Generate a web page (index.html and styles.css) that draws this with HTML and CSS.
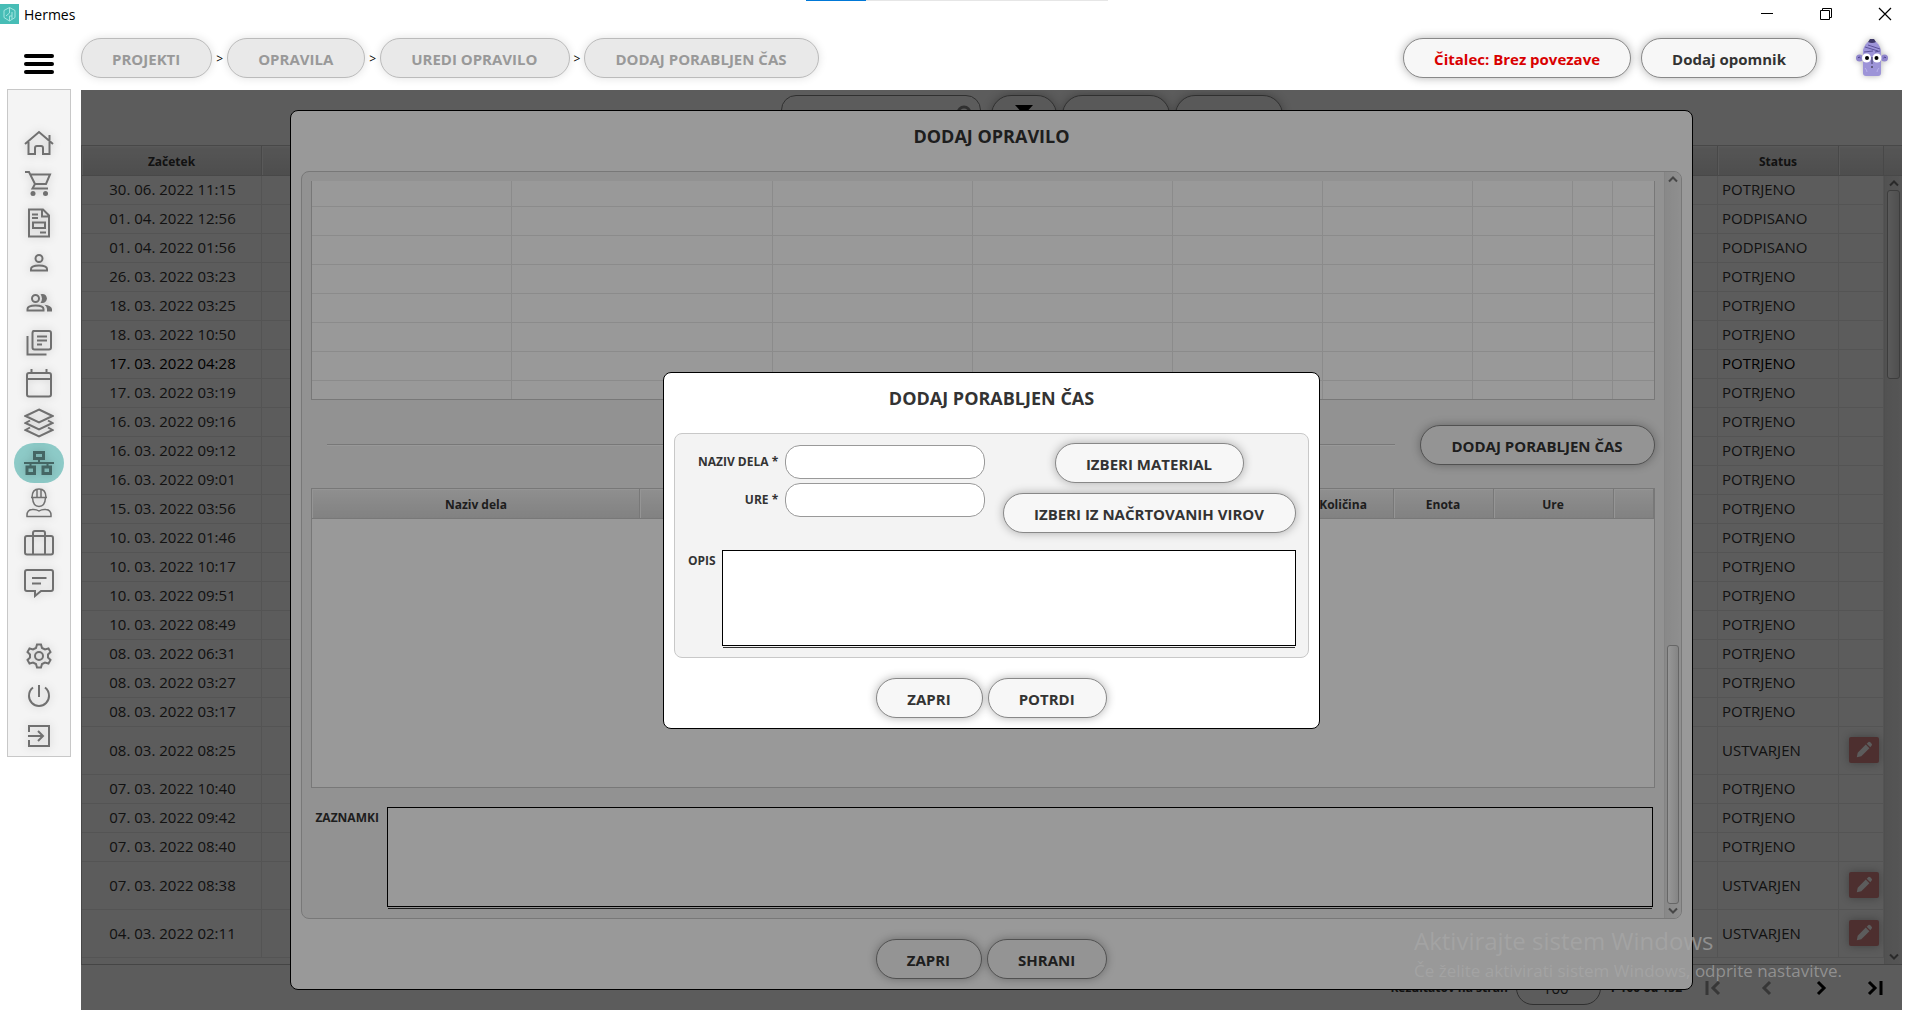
FILE: index.html
```html
<!DOCTYPE html>
<html lang="sl">
<head>
    <meta charset="UTF-8">
    <meta name="viewport" content="width=device-width, initial-scale=1.0">
    <title>Hermes</title>
    <link rel="stylesheet" href="styles.css">
</head>
<body>
    <div class="progress"></div>

    <div class="titlebar">
        <svg class="app-icon" viewBox="0 0 19 20"><rect width="19" height="20" fill="#47bdb6"/><path d="M9.500 3.500L15 6.500V13.500L9.500 17L4 13.500V6.500L9.500 3.500M9.500 3.500V9L6 12M9.500 17V12H12V15M12 12V8" fill="none" stroke="#a5e6e0" stroke-width="1"/></svg>
        <span class="app-name">Hermes</span>
        <div class="window-buttons">
            <button aria-label="Minimiraj"><svg viewBox="0 0 14 14"><path d="M1 6.500H13" stroke="#000"/></svg></button>
            <button aria-label="Obnovi"><svg viewBox="0 0 14 14"><path d="M1.500 3.500H10.500V12.500H1.500ZM3.500 3.500V1.500H12.500V10.500H10.500" fill="none" stroke="#000"/></svg></button>
            <button aria-label="Zapri okno"><svg viewBox="0 0 14 14"><path d="M1 1L13 13M13 1L1 13" stroke="#000" stroke-width="1.200"/></svg></button>
        </div>
    </div>

    <header class="header">
        <button class="menu-button" aria-label="Meni"><span></span><span></span><span></span></button>
        <nav class="breadcrumbs">
            <button class="btn" disabled>PROJEKTI</button>
            <span>&gt;</span>
            <button class="btn" disabled>OPRAVILA</button>
            <span>&gt;</span>
            <button class="btn" disabled>UREDI OPRAVILO</button>
            <span>&gt;</span>
            <button class="btn" disabled>DODAJ PORABLJEN ČAS</button>
        </nav>
        <div class="header-right">
            <button class="btn btn-alert">Čitalec: Brez povezave</button>
            <button class="btn">Dodaj opomnik</button>
            <svg class="avatar" viewBox="0 0 32 38">
                <circle cx="3.500" cy="19" r="3.500" fill="#8f85cc"/><circle cx="28.500" cy="19" r="3.500" fill="#8f85cc"/>
                <path d="M2 19q1-2 2.500 0M27.500 19q1.500-2 2.500 0" fill="none" stroke="#4a3f8c"/>
                <path d="M7 11Q9 4 14 2H18Q23 4 25 11V34Q25 37 22 37H10Q7 37 7 34Z" fill="#9d94d8"/>
                <path d="M12 3L14 0H18L20 3Q16 5 12 3Z" fill="#3f3868"/>
                <path d="M9 8L22 12M12 6L24 10M8 13L17 12M19 13L24 12" stroke="#5c5299" stroke-width="1"/>
                <circle cx="10.500" cy="19" r="4.500" fill="#fff"/><circle cx="21" cy="19" r="4.500" fill="#fff"/>
                <circle cx="11" cy="19" r="2" fill="#000"/><circle cx="20.500" cy="19" r="2" fill="#000"/>
                <path d="M16 18V25" stroke="#3f3868"/><path d="M15 28H17" stroke="#222"/>
                <path d="M9 29q2 2 2 4M23 29q-2 2-2 4" fill="none" stroke="#b8b0ea"/>
            </svg>
        </div>
    </header>

    <div class="layout">
        <nav class="sidebar">
            <a href="#" aria-label="Domov"><svg viewBox="0 0 30 30"><path d="M1 16L15 4L29 16M4.500 14V26H11V20Q11 18 13 18H17Q19 18 19 20V26H25.500V14M25.500 12V7" stroke-width="2"/></svg></a>
            <a href="#" aria-label="Naročila"><svg viewBox="0 0 30 30"><path d="M1 4H5L11 16H22L26 6.500H6M11 16L8.500 20.500H24" stroke-width="2"/><circle cx="9" cy="25.500" r="2.500" class="solid"/><circle cx="21.500" cy="25.500" r="2.500" class="solid"/></svg></a>
            <a href="#" aria-label="Dokumenti"><svg viewBox="0 0 30 30"><path d="M5 1.500H19L25 7.500V28.500H5ZM18 1.500V8.500H25M9 14.500H21V20H9ZM8 6.500H14M8 10H14M16 24.500H22" stroke-width="2"/></svg></a>
            <a href="#" aria-label="Uporabnik"><svg viewBox="0 0 30 30"><circle cx="15" cy="10.500" r="3.500" stroke-width="2"/><path d="M7 22.500V21Q7 17.500 15 17.500Q23 17.500 23 21V22.500Z" stroke-width="2"/></svg></a>
            <a href="#" aria-label="Skupine"><svg viewBox="0 0 30 30"><circle cx="11.500" cy="10.500" r="3.500" stroke-width="2"/><path d="M3.500 22.500V21Q3.500 17.500 11.500 17.500Q19.500 17.500 19.500 21V22.500Z" stroke-width="2"/><path class="solid" d="M16.500 6.300Q22 5 23 10.500Q22 16 16.500 14.700Q19.500 10.500 16.500 6.300ZM20.500 16.800Q27.500 17.500 28 21V23.500H23V21Q23 18.500 20.500 16.800Z"/></svg></a>
            <a href="#" aria-label="Novice"><svg viewBox="0 0 30 30"><path d="M8.500 3H25Q27 3 27 5V19.500Q27 21.500 25 21.500H10.500Q8.500 21.500 8.500 19.500V5Q8.500 3 10.500 3M3.500 8V26.500H22.500M13 8.500H23M13 12.500H23M13 16.500H18" stroke-width="2"/></svg></a>
            <a href="#" aria-label="Koledar"><svg viewBox="0 0 30 30"><path d="M5 5H25Q27 5 27 7V26.500Q27 28.500 25 28.500H5Q3 28.500 3 26.500V7Q3 5 5 5ZM3 11H27M7.500 1V5M22.500 1V5" stroke-width="2"/></svg></a>
            <a href="#" aria-label="Sloji"><svg viewBox="0 0 30 30"><path d="M15 1.500L28.500 8L15 14.500L1.500 8ZM6 12.500L1.500 15L15 21.500L28.500 15L24 12.500M6 19.500L1.500 22L15 28.500L28.500 22L24 19.500" stroke-width="2"/></svg></a>
            <a href="#" class="active" aria-label="Projekti"><svg viewBox="0 0 30 30"><path d="M0 15H30M15 10V15M6.500 15V18M23.500 15V18" stroke-width="2"/><path d="M10.500 4.500H19.500V10.500H10.500ZM3 19H10.500V25.500H3ZM19 19H26.500V25.500H19Z" stroke-width="3"/></svg></a>
            <a href="#" aria-label="Delavci"><svg viewBox="0 0 30 30"><path d="M8 9.500Q8 1 15 1Q22 1 22 9.500M7 9.500H23M13 9.500V2M17 9.500V2M8.500 9.500Q9 18.500 15 18.500Q21 18.500 21.500 9.500M3 28.500Q2.500 22 8 21.500Q12 21 15 23Q18 21 22 21.500Q27.500 22 27 28.500Z" stroke-width="1.500"/></svg></a>
            <a href="#" aria-label="Potovanja"><svg viewBox="0 0 30 30"><path d="M3 8H27Q29 8 29 10V24.500Q29 26.500 27 26.500H3Q1 26.500 1 24.500V10Q1 8 3 8ZM9 26.500V5Q9 3 11 3H19Q21 3 21 5V26.500" stroke-width="2"/></svg></a>
            <a href="#" aria-label="Sporočila"><svg viewBox="0 0 30 30"><path d="M3 2H27Q29 2 29 4V21Q29 23 27 23H17L11 28V23H3Q1 23 1 21V4Q1 2 3 2ZM8 10H22.500M8 15.500H17" stroke-width="2"/></svg></a>
            <a href="#" class="settings" aria-label="Nastavitve"><svg viewBox="0 0 30 30"><path d="M13 3.500H17L18 7L21 8.500L24.500 7.500L26.500 11L24 13.500V16.500L26.500 19L24.500 22.500L21 21.500L18 23L17 26.500H13L12 23L9 21.500L5.500 22.500L3.500 19L6 16.500V13.500L3.500 11L5.500 7.500L9 8.500L12 7Z" stroke-width="2"/><circle cx="15" cy="15" r="4" stroke-width="2"/></svg></a>
            <a href="#" aria-label="Izklop"><svg viewBox="0 0 30 30"><path d="M15 4V16M9 6.500Q5 9.500 5 15A10 10 0 0 0 25 15Q25 9.500 21 6.500" stroke-width="2"/></svg></a>
            <a href="#" aria-label="Odjava"><svg viewBox="0 0 30 30"><path d="M5 11V5H25V25H5V19M4 15H18M14 10L19 15L14 20" stroke-width="2"/></svg></a>
        </nav>

        <main class="content">
            <div class="toolbar">
                <div class="search">
                    <input type="text" aria-label="Iskanje">
                    <svg viewBox="0 0 20 20"><circle cx="8" cy="8" r="6" fill="none" stroke="#888" stroke-width="3"/><path d="M12 12L18 18" stroke="#888" stroke-width="3"/></svg>
                </div>
                <button class="btn tool-filter" aria-label="Filter"><svg viewBox="0 0 20 20"><path d="M0 1H20L12 10V19H8V10Z"/></svg></button>
                <button class="btn tool-button" aria-label="Dodaj"></button>
                <button class="btn tool-button" aria-label="Osveži"></button>
            </div>

            <div class="table-area">
                <table class="tasks">
                    <colgroup><col class="col-start"><col><col class="col-status"><col class="col-edit"></colgroup>
                    <thead>
                        <tr><th>Začetek</th><th></th><th>Status</th><th></th></tr>
                    </thead>
                    <tbody>
                        <tr><td>30. 06. 2022 11:15</td><td></td><td>POTRJENO</td><td></td></tr>
                        <tr><td>01. 04. 2022 12:56</td><td></td><td>PODPISANO</td><td></td></tr>
                        <tr><td>01. 04. 2022 01:56</td><td></td><td>PODPISANO</td><td></td></tr>
                        <tr><td>26. 03. 2022 03:23</td><td></td><td>POTRJENO</td><td></td></tr>
                        <tr><td>18. 03. 2022 03:25</td><td></td><td>POTRJENO</td><td></td></tr>
                        <tr><td>18. 03. 2022 10:50</td><td></td><td>POTRJENO</td><td></td></tr>
                        <tr class="selected"><td>17. 03. 2022 04:28</td><td></td><td>POTRJENO</td><td></td></tr>
                        <tr><td>17. 03. 2022 03:19</td><td></td><td>POTRJENO</td><td></td></tr>
                        <tr><td>16. 03. 2022 09:16</td><td></td><td>POTRJENO</td><td></td></tr>
                        <tr><td>16. 03. 2022 09:12</td><td></td><td>POTRJENO</td><td></td></tr>
                        <tr><td>16. 03. 2022 09:01</td><td></td><td>POTRJENO</td><td></td></tr>
                        <tr><td>15. 03. 2022 03:56</td><td></td><td>POTRJENO</td><td></td></tr>
                        <tr><td>10. 03. 2022 01:46</td><td></td><td>POTRJENO</td><td></td></tr>
                        <tr><td>10. 03. 2022 10:17</td><td></td><td>POTRJENO</td><td></td></tr>
                        <tr><td>10. 03. 2022 09:51</td><td></td><td>POTRJENO</td><td></td></tr>
                        <tr><td>10. 03. 2022 08:49</td><td></td><td>POTRJENO</td><td></td></tr>
                        <tr><td>08. 03. 2022 06:31</td><td></td><td>POTRJENO</td><td></td></tr>
                        <tr><td>08. 03. 2022 03:27</td><td></td><td>POTRJENO</td><td></td></tr>
                        <tr><td>08. 03. 2022 03:17</td><td></td><td>POTRJENO</td><td></td></tr>
                        <tr class="editable"><td>08. 03. 2022 08:25</td><td></td><td>USTVARJEN</td><td><button class="edit" aria-label="Uredi"><svg viewBox="0 0 20 20"><path d="M2 18L3 13L12 4L16 8L7 17ZM13 3L15 1Q16 0.500 17 1.500L18.500 3Q19.500 4 18.500 5L17 7Z"/></svg></button></td></tr>
                        <tr><td>07. 03. 2022 10:40</td><td></td><td>POTRJENO</td><td></td></tr>
                        <tr><td>07. 03. 2022 09:42</td><td></td><td>POTRJENO</td><td></td></tr>
                        <tr><td>07. 03. 2022 08:40</td><td></td><td>POTRJENO</td><td></td></tr>
                        <tr class="editable"><td>07. 03. 2022 08:38</td><td></td><td>USTVARJEN</td><td><button class="edit" aria-label="Uredi"><svg viewBox="0 0 20 20"><path d="M2 18L3 13L12 4L16 8L7 17ZM13 3L15 1Q16 0.500 17 1.500L18.500 3Q19.500 4 18.500 5L17 7Z"/></svg></button></td></tr>
                        <tr class="editable"><td>04. 03. 2022 02:11</td><td></td><td>USTVARJEN</td><td><button class="edit" aria-label="Uredi"><svg viewBox="0 0 20 20"><path d="M2 18L3 13L12 4L16 8L7 17ZM13 3L15 1Q16 0.500 17 1.500L18.500 3Q19.500 4 18.500 5L17 7Z"/></svg></button></td></tr>
                    </tbody>
                </table>
                <div class="table-scroll">
                    <div class="scroll-corner"></div>
                    <div class="scrollbar scrollbar-top">
                        <svg viewBox="0 0 10 10"><path d="M1 7L5 3L9 7"/></svg>
                        <div class="thumb"></div>
                        <svg viewBox="0 0 10 10"><path d="M1 3L5 7L9 3"/></svg>
                    </div>
                </div>
            </div>

            <div class="pagination">
                <label for="pageSize">Rezultatov na stran</label>
                <select id="pageSize"><option>100</option></select>
                <span class="range">1-100 od 152</span>
                <button disabled aria-label="Prva stran"><svg viewBox="0 0 18 18"><path d="M3 2V16M15 3L9 9L15 15"/></svg></button>
                <button disabled aria-label="Prejšnja stran"><svg viewBox="0 0 18 18"><path d="M12 3L6 9L12 15"/></svg></button>
                <button aria-label="Naslednja stran"><svg viewBox="0 0 18 18"><path d="M6 3L12 9L6 15"/></svg></button>
                <button aria-label="Zadnja stran"><svg viewBox="0 0 18 18"><path d="M3 3L9 9L3 15M15 2V16"/></svg></button>
            </div>

            <!-- Dodaj opravilo -->
            <div class="overlay">
                <section class="modal modal-task">
                    <h2>DODAJ OPRAVILO</h2>
                    <div class="panel panel-scroll">
                        <div class="panel-content">
                            <table class="grid">
                                <colgroup><col class="w200"><col class="w260"><col class="w200"><col class="w200"><col class="w150"><col class="w150"><col class="w100"><col class="w40"><col></colgroup>
                                <tbody>
                                    <tr class="cut"><td></td><td></td><td></td><td></td><td></td><td></td><td></td><td></td><td></td></tr>
                                    <tr><td></td><td></td><td></td><td></td><td></td><td></td><td></td><td></td><td></td></tr>
                                    <tr><td></td><td></td><td></td><td></td><td></td><td></td><td></td><td></td><td></td></tr>
                                    <tr><td></td><td></td><td></td><td></td><td></td><td></td><td></td><td></td><td></td></tr>
                                    <tr><td></td><td></td><td></td><td></td><td></td><td></td><td></td><td></td><td></td></tr>
                                    <tr><td></td><td></td><td></td><td></td><td></td><td></td><td></td><td></td><td></td></tr>
                                    <tr><td></td><td></td><td></td><td></td><td></td><td></td><td></td><td></td><td></td></tr>
                                    <tr class="last"><td></td><td></td><td></td><td></td><td></td><td></td><td></td><td></td><td></td></tr>
                                </tbody>
                            </table>

                            <div class="divider">
                                <hr>
                                <button class="btn">DODAJ PORABLJEN ČAS</button>
                            </div>

                            <div class="work">
                                <table>
                                    <colgroup><col class="w328"><col><col class="w100"><col class="w100"><col class="w120"><col class="w40"></colgroup>
                                    <thead>
                                        <tr><th>Naziv dela</th><th></th><th>Količina</th><th>Enota</th><th>Ure</th><th></th></tr>
                                    </thead>
                                </table>
                            </div>

                            <div class="notes">
                                <label for="notes">ZAZNAMKI</label>
                                <textarea id="notes"></textarea>
                            </div>
                        </div>
                        <div class="scrollbar scrollbar-bottom">
                            <svg viewBox="0 0 10 10"><path d="M1 7L5 3L9 7"/></svg>
                            <div class="thumb"></div>
                            <svg viewBox="0 0 10 10"><path d="M1 3L5 7L9 3"/></svg>
                        </div>
                    </div>
                    <div class="modal-buttons">
                        <button class="btn">ZAPRI</button>
                        <button class="btn">SHRANI</button>
                    </div>
                </section>
            </div>

            <!-- Dodaj porabljen čas -->
            <div class="overlay">
                <section class="modal modal-time">
                    <h2>DODAJ PORABLJEN ČAS</h2>
                    <div class="panel panel-form">
                        <div class="form-top">
                            <div class="fields">
                                <label for="workName">NAZIV DELA *</label>
                                <input type="text" id="workName">
                                <label for="hours">URE *</label>
                                <input type="text" id="hours">
                            </div>
                            <div class="pickers">
                                <button class="btn">IZBERI MATERIAL</button>
                                <button class="btn">IZBERI IZ NAČRTOVANIH VIROV</button>
                            </div>
                        </div>
                        <div class="description">
                            <label for="description">OPIS</label>
                            <textarea id="description"></textarea>
                        </div>
                    </div>
                    <div class="modal-buttons">
                        <button class="btn">ZAPRI</button>
                        <button class="btn">POTRDI</button>
                    </div>
                </section>
            </div>
        </main>
    </div>

    <div class="watermark">
        <p class="watermark-title">Aktivirajte sistem Windows</p>
        <p>Če želite aktivirati sistem Windows, odprite nastavitve.</p>
    </div>
</body>
</html>
```

FILE: styles.css
```css
* {
    box-sizing: border-box;
}

body {
    margin: 0;
    height: 100vh;
    display: flex;
    flex-direction: column;
    position: relative;
    overflow: hidden;
    background-color: #fff;
    color: #333;
    font-family: "Open Sans", "Noto Sans", sans-serif;
    font-size: 15px;
}

button, input, select, textarea {
    font-family: inherit;
    color: inherit;
}

button {
    padding: 0;
    border: none;
    background: none;
}

table {
    width: 100%;
    table-layout: fixed;
    border-collapse: separate;
    border-spacing: 0;
}

/* Title bar */
.progress {
    position: absolute;
    top: 0;
    left: 806px;
    width: 302px;
    height: 1px;
    background: linear-gradient(to right, #0078d7 20%, #e6e6e6 20%);
}

.titlebar {
    height: 30px;
    flex: none;
    display: flex;
    align-items: center;
    gap: 5px;
    padding-bottom: 2px;
    color: #000;
    font-size: 14px;
}

.app-icon {
    width: 19px;
    height: 20px;
}

.window-buttons {
    margin-left: auto;
    padding-right: 20px;
    display: flex;
    gap: 45px;
}

.window-buttons button,
.window-buttons svg {
    display: block;
    width: 14px;
    height: 14px;
}

/* Header */
.header {
    height: 60px;
    flex: none;
    display: flex;
    align-items: flex-start;
    padding: 8px 24px 0;
}

.menu-button {
    width: 30px;
    margin: 16px 27px 0 0;
    display: flex;
    flex-direction: column;
    gap: 4px;
}

.menu-button span {
    width: 100%;
    height: 4px;
    border-radius: 2px;
    background-color: #000;
}

.btn {
    height: 40px;
    padding: 2px 31px 0 30px;
    border: 1px solid #888;
    border-radius: 20px;
    background-color: #f7f7f7;
    box-shadow: 0 0 10px rgba(0, 0, 0, 0.3);
    color: #333;
    font-size: 15px;
    font-weight: bold;
    white-space: nowrap;
}

.btn:disabled {
    border-color: #bbb;
    background-color: #e9e9e9;
    box-shadow: 0 0 10px rgba(0, 0, 0, 0.12);
    color: #999;
}

.breadcrumbs {
    display: flex;
    align-items: center;
    gap: 4px;
    color: #000;
    font-size: 12px;
}

.header-right {
    margin-left: auto;
    display: flex;
    align-items: center;
    gap: 10px;
}

.header-right .btn {
    padding: 2px 30px 0;
}

.header-right .btn-alert {
    color: #d90000;
}

.avatar {
    width: 32px;
    height: 38px;
    margin-left: 29px;
    filter: drop-shadow(0 0 3px rgba(0, 0, 0, 0.3));
}

/* Sidebar */
.layout {
    flex: 1;
    min-height: 0;
    display: flex;
    align-items: flex-start;
    gap: 10px;
    padding: 0 10px 15px 7px;
}

.sidebar {
    width: 64px;
    flex: none;
    display: flex;
    flex-direction: column;
    align-items: center;
    margin-top: -1px;
    padding-top: 33px;
    border: 1px solid #c8c8c8;
    background-color: #f4f4f4;
}

.sidebar a {
    width: 50px;
    height: 40px;
    display: flex;
    align-items: center;
    justify-content: center;
    border-radius: 20px;
}

.sidebar .active {
    background-color: #8dcac7;
}

.sidebar .settings {
    margin-top: 33px;
}

.sidebar svg {
    width: 30px;
    height: 30px;
    fill: none;
    stroke: #707070;
    filter: drop-shadow(0 0 4px rgba(0, 0, 0, 0.2));
}

.sidebar .solid {
    fill: #707070;
    stroke: none;
}

.sidebar .active svg {
    stroke: #456664;
}

/* Content */
.content {
    flex: 1;
    min-width: 0;
    align-self: stretch;
    display: flex;
    flex-direction: column;
    position: relative;
    overflow: hidden;
}

.toolbar {
    height: 55px;
    flex: none;
    display: flex;
    justify-content: center;
    gap: 5px;
    padding: 5px 0 0 80px;
}

.search {
    position: relative;
    margin-right: 5px;
}

.search input {
    width: 200px;
    height: 40px;
    border: 1px solid #888;
    border-radius: 15px;
    background: none;
}

.search svg {
    position: absolute;
    top: 10px;
    right: 5px;
    width: 20px;
}

.toolbar .btn {
    padding: 0;
}

.tool-filter {
    width: 66px;
}

.tool-filter svg {
    width: 18px;
    fill: #000;
}

.tool-button {
    width: 108px;
}

.table-area {
    flex: 1;
    min-height: 0;
    display: flex;
    overflow: hidden;
    border-bottom: 1px solid #c0c0c0;
    border-left: 1px solid #c8c8c8;
}

th {
    height: 31px;
    padding: 2px 0 0;
    border: 1px solid #c8c8c8;
    border-left: none;
    background: linear-gradient(#efefef, #d8d8d8);
    box-shadow: inset 1px 1px 0 #f8f8f8;
    font-size: 12px;
    font-weight: bold;
}

.tasks {
    flex: 1;
    align-self: flex-start;
}

.col-start {
    width: 180px;
}

.col-status {
    width: 121px;
}

.col-edit {
    width: 45px;
}

.tasks td {
    height: 29px;
    padding: 0 4px 2px;
    border-right: 1px solid #ebebeb;
    border-bottom: 1px solid #ebebeb;
    line-height: 20px;
}

.tasks td:first-child {
    padding-left: 6px;
    text-align: center;
}

.tasks .editable td {
    height: 48px;
}

.tasks .selected {
    color: #000;
}

.edit {
    width: 30px;
    height: 26px;
    display: block;
    margin-left: auto;
    border-radius: 2px;
    background-color: #d88484;
    box-shadow: 0 0 8px rgba(0, 0, 0, 0.3);
}

.edit svg {
    display: block;
    width: 18px;
    margin: 0 auto;
    fill: #fff;
}

.table-scroll {
    width: 18px;
    flex: none;
    display: flex;
    flex-direction: column;
}

.scroll-corner {
    height: 31px;
    border-top: 1px solid #c8c8c8;
    border-bottom: 1px solid #c8c8c8;
    background: linear-gradient(#efefef, #d8d8d8);
}

.scrollbar {
    flex: 1;
    display: flex;
    flex-direction: column;
    align-items: center;
    padding: 1px 2px;
    border-left: 1px solid #dcdcdc;
    background: linear-gradient(to right, #e4e4e4, #efefef);
}

.scrollbar svg {
    width: 10px;
    height: 13px;
    fill: none;
    stroke: #777;
    stroke-width: 2;
}

.thumb {
    width: 100%;
    border: 1px solid #aaa;
    border-radius: 3px;
    background: linear-gradient(to right, #fcfcfc, #dedede);
}

.scrollbar-top .thumb {
    height: 189px;
    margin-bottom: auto;
}

.scrollbar-bottom .thumb {
    height: 259px;
    margin-top: auto;
}

.pagination {
    height: 45px;
    flex: none;
    display: flex;
    align-items: center;
    justify-content: flex-end;
    gap: 8px;
    padding-right: 18px;
    font-size: 12px;
    font-weight: bold;
}

.pagination select {
    width: 85px;
    height: 34px;
    padding: 0 26px;
    border: 1px solid #888;
    border-radius: 17px;
    background: none;
    appearance: none;
    font-size: 15px;
}

.pagination button {
    width: 18px;
    height: 18px;
    margin-left: 28px;
}

.pagination .range + button {
    margin-left: 14px;
}

.pagination svg {
    display: block;
    fill: none;
    stroke: #000;
    stroke-width: 3;
}

.pagination button:disabled svg {
    stroke: #999;
}

/* Modals */
.overlay {
    position: absolute;
    inset: 0;
    display: flex;
    align-items: center;
    justify-content: center;
    padding: 20px 0;
    background-color: rgba(0, 0, 0, 0.4);
}

.modal {
    display: flex;
    flex-direction: column;
    padding: 0 10px 10px;
    border: 1px solid #000;
    border-radius: 8px;
    background-color: #fff;
}

.modal-task {
    width: 77%;
    align-self: stretch;
}

.modal h2 {
    margin: 0 0 10px;
    font-size: 18px;
    line-height: 50px;
    text-align: center;
}

.panel {
    border: 1px solid #c8c8c8;
    border-radius: 8px;
    background-color: #f3f3f3;
}

.panel-scroll {
    flex: 1;
    min-height: 0;
    display: flex;
    overflow: hidden;
}

.panel-scroll .scrollbar {
    width: 17px;
    flex: none;
}

.panel-content {
    flex: 1;
    min-width: 0;
    display: flex;
    flex-direction: column;
    padding: 9px;
}

.grid {
    border: 1px solid #c8c8c8;
    border-top: none;
    background-color: #fff;
}

.grid td {
    height: 29px;
    padding: 0;
    border-right: 1px solid #e8e8e8;
    border-bottom: 1px solid #e8e8e8;
}

.grid .cut td {
    height: 26px;
}

.grid .last td {
    height: 18px;
    border-bottom: none;
}

.grid td:last-child {
    border-right: none;
}

.w40 {
    width: 40px;
}

.w100 {
    width: 100px;
}

.w120 {
    width: 120px;
}

.w150 {
    width: 150px;
}

.w200 {
    width: 200px;
}

.w260 {
    width: 261px;
}

.w328 {
    width: 328px;
}

.divider {
    display: flex;
    align-items: center;
    gap: 25px;
    padding: 25px 0 23px 16px;
}

.divider hr {
    flex: 1;
    margin: 0;
    border: none;
    border-top: 1px solid #c8c8c8;
    border-bottom: 1px solid #fff;
}

.work {
    flex: 1;
    border: 1px solid #c8c8c8;
    border-top: none;
    background-color: #fff;
}

.notes {
    display: flex;
    gap: 8px;
    padding: 19px 2px 2px 4px;
}

.panel label {
    font-size: 12px;
    font-weight: bold;
    line-height: 22px;
}

textarea {
    flex: 1;
    min-width: 0;
    border: 1px solid #000;
    background-color: #fff;
    box-shadow: 0 2px 0 -1px #f3f3f3, 0 3px 0 -1px #333;
    resize: none;
}

.notes textarea {
    height: 100px;
}

.modal-buttons {
    display: flex;
    justify-content: center;
    gap: 5px;
    padding-top: 20px;
}

.modal-time {
    width: 657px;
    max-width: 100%;
}

.panel-form {
    padding: 9px 12px 11px 13px;
}

.form-top {
    display: flex;
    justify-content: space-between;
    align-items: flex-start;
}

.fields {
    display: grid;
    grid-template-columns: auto 200px;
    gap: 4px 7px;
    align-items: center;
    padding: 2px 0 0 10px;
    text-align: right;
}

.fields input {
    width: 200px;
    height: 34px;
    padding: 0 12px;
    border: 1px solid #999;
    border-radius: 15px;
    background-color: #fff;
}

.pickers {
    display: flex;
    flex-direction: column;
    align-items: center;
    gap: 10px;
}

.description {
    display: flex;
    gap: 6px;
    margin-top: 17px;
}

.description textarea {
    height: 96px;
}

.notes label,
.description label {
    flex: none;
}

/* Windows activation notice */
.watermark {
    position: absolute;
    right: 70px;
    bottom: 40px;
    color: rgba(168, 168, 168, 0.7);
    font-size: 17px;
    line-height: 28px;
    pointer-events: none;
}

.watermark p {
    margin: 0;
}

.watermark .watermark-title {
    font-size: 24px;
    line-height: 32px;
}
```
